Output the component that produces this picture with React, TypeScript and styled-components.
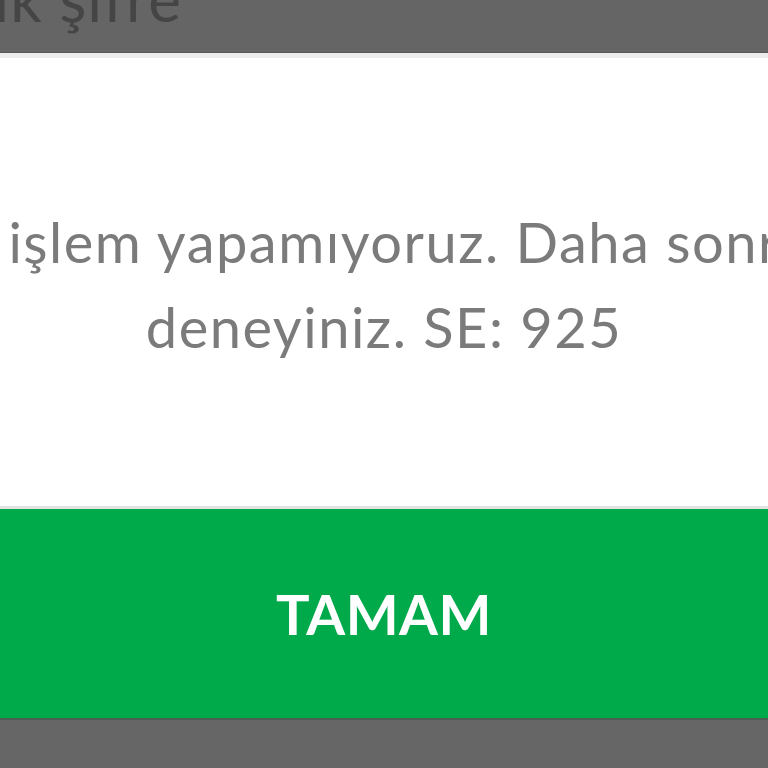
import styled, { createGlobalStyle } from 'styled-components';

const GlobalStyle = createGlobalStyle`
    html, body {
        margin: 0;
        padding: 0;
        background: #666666;
        overflow: hidden;
    }
    body {
        font-family: Lato, "Noto Sans", sans-serif;
    }
`;

function App() {
    return (
        <>
            <GlobalStyle />
            <Screen>
                <Header>
                    <TitleSlot>
                        <HeaderTitle>Tek kullanımlık şifre</HeaderTitle>
                    </TitleSlot>
                </Header>
                <Dialog>
                    <Message>
                        <Line>Şu anda işlem yapamıyoruz. Daha sonra tekrar</Line>
                        <Line>deneyiniz. SE: 925</Line>
                    </Message>
                    <OkButton type="button">TAMAM</OkButton>
                </Dialog>
                <Footer />
            </Screen>
        </>
    );
}

export default App;


const Screen = styled.div`
    width: 768px;
    height: 768px;
    display: flex;
    flex-direction: column;
    overflow: hidden;
    background: #666666;
`;

const Header = styled.div`
    height: 52px;
    flex-shrink: 0;
    display: flex;
    background: #656565;
    border-bottom: 1px solid #575757;
`;

// title runs off to the left, only its tail shows under the dialog
const TitleSlot = styled.div`
    width: 182px;
    display: flex;
    justify-content: flex-end;
`;

const HeaderTitle = styled.div`
    flex-shrink: 0;
    white-space: nowrap;
    margin-top: -33px;
    font-size: 62px;
    font-weight: 400;
    color: #454545;
    line-height: 1;
    letter-spacing: 1px;
`;

const Dialog = styled.div`
    display: flex;
    flex-direction: column;
    background: #ffffff;
    border-top: 5px solid #ececec;
`;

const Message = styled.div`
    height: 451px;
    box-sizing: border-box;
    display: flex;
    flex-direction: column;
    align-items: center;
    justify-content: center;
    padding-top: 4px;
    border-bottom: 3px solid #e2e2e2;
    color: #7b7b7b;
    font-size: 56px;
    font-weight: 400;
    letter-spacing: 1.5px;
    line-height: 85px;
`;

const Line = styled.span`
    flex-shrink: 0;
    white-space: nowrap;
`;

const OkButton = styled.button`
    height: 211px;
    border: none;
    margin: 0;
    padding: 0;
    background: #00aa4a;
    color: #ffffff;
    font-family: Lato, "Noto Sans", sans-serif;
    font-size: 56px;
    font-weight: 700;
    letter-spacing: 0.5px;
    border-bottom: 2px solid #4d5d53;
`;

const Footer = styled.div`
    flex: 1;
    background: #666666;
`;
